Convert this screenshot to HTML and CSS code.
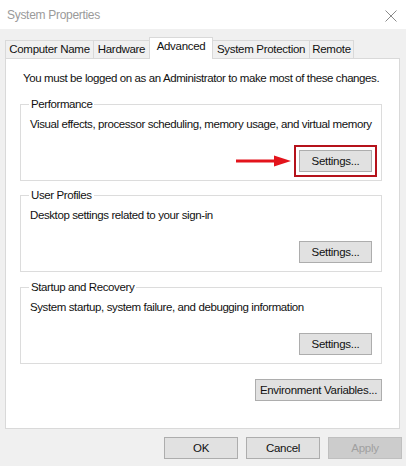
FILE: index.html
```html
<!DOCTYPE html>
<html>
<head>
<meta charset="utf-8">
<link rel="stylesheet" href="styles.css">
</head>
<body>
<div class="window">
  <div class="titlebar">
    <span class="title">System Properties</span>
    <svg class="close" width="12" height="12" viewBox="0 0 12 12"><path d="M0.5 0.5 L11.5 11.5 M11.5 0.5 L0.5 11.5" stroke="#8a8a8a" stroke-width="1" fill="none"/></svg>
  </div>
  <div class="content">
    <div class="tabs">
      <div class="tab t-name">Computer Name</div>
      <div class="tab t-hw">Hardware</div>
      <div class="tab active t-adv">Advanced</div>
      <div class="tab t-sp">System Protection</div>
      <div class="tab t-rem">Remote</div>
    </div>
    <div class="panel">
      <p class="notice">You must be logged on as an Administrator to make most of these changes.</p>
      <fieldset class="group g-perf">
        <legend>Performance</legend>
        <p class="desc">Visual effects, processor scheduling, memory usage, and virtual memory</p>
        <div class="row">
          <svg class="arrow" width="56" height="12" viewBox="0 0 56 12"><path d="M0 4.5 H38 V0.5 L55 6 L38 11.5 V7.5 H0 Z" fill="#e3141c"/></svg>
          <button class="btn highlight">Settings...</button>
        </div>
      </fieldset>
      <fieldset class="group g-user">
        <legend>User Profiles</legend>
        <p class="desc">Desktop settings related to your sign-in</p>
        <div class="row">
          <button class="btn">Settings...</button>
        </div>
      </fieldset>
      <fieldset class="group g-start">
        <legend>Startup and Recovery</legend>
        <p class="desc">System startup, system failure, and debugging information</p>
        <div class="row">
          <button class="btn">Settings...</button>
        </div>
      </fieldset>
      <div class="env-row">
        <button class="btn env">Environment Variables...</button>
      </div>
    </div>
    <div class="footer">
      <button class="btn dlg">OK</button>
      <button class="btn dlg">Cancel</button>
      <button class="btn dlg disabled">Apply</button>
    </div>
  </div>
</div>
</body>
</html>
```

FILE: styles.css
```css
* { box-sizing: border-box; }
html, body {
  margin: 0;
  padding: 0;
  background: #f0f0f0;
}
body {
  font-family: "Liberation Sans", Arial, sans-serif;
  font-size: 11.5px;
  letter-spacing: -0.4px;
  color: #111;
}
.window {
  width: 406px;
  height: 466px;
  background: #f0f0f0;
}
.titlebar {
  height: 29px;
  background: #fff;
  display: flex;
  align-items: center;
  justify-content: space-between;
  padding: 0 9px 0 7px;
}
.title {
  color: #9a9a9a;
  font-size: 12px;
  letter-spacing: -0.3px;
  margin-top: 1px;
}
.close {
  display: block;
  margin-top: 2px;
}
.content {
  padding: 0 6px 0 5px;
}
.tabs {
  display: flex;
  align-items: flex-end;
  height: 21px;
  margin-top: 8px;
  position: relative;
  z-index: 1;
}
.tab {
  height: 18px;
  line-height: 17px;
  border: 1px solid #d9d9d9;
  border-bottom: none;
  background: #f0f0f0;
  text-align: center;
  margin-right: -1px;
  color: #111;
  white-space: nowrap;
  letter-spacing: -0.3px;
}
.t-name { width: 89px; }
.t-hw { width: 57px; }
.t-adv { width: 64px; }
.t-sp { width: 98px; }
.t-rem { width: 45px; }
.tab.active {
  height: 22px;
  line-height: 17px;
  background: #fff;
  margin-bottom: -1px;
  position: relative;
  z-index: 2;
}
.panel {
  background: #fff;
  border: 1px solid #d9d9d9;
  height: 371px;
  padding: 12px 17px 0 14px;
}
.notice {
  margin: 0;
  padding-left: 3px;
  line-height: 15px;
  white-space: nowrap;
}
.group {
  margin: 0;
  border: 1px solid #dcdcdc;
  padding: 0 9px 8px 8px;
  min-width: 0;
}
.group legend {
  padding: 0 2px;
  line-height: 14px;
  margin-left: 0;
}
.g-perf { margin-top: 11px; }
.g-user { margin-top: 7px; }
.g-start { margin-top: 8px; }
.desc {
  margin: 6px 0 0 1px;
  line-height: 14px;
  white-space: nowrap;
}
.row {
  display: flex;
  justify-content: flex-end;
  align-items: center;
  margin-top: 19px;
}
.arrow {
  display: block;
  margin-right: 7px;
}
.btn {
  font-family: "Liberation Sans", Arial, sans-serif;
  font-size: 11.5px;
  letter-spacing: -0.3px;
  color: #111;
  background: #e1e1e1;
  border: 1px solid #adadad;
  height: 22px;
  width: 73px;
  padding: 0;
  margin: 0;
}
.highlight {
  outline: 2px solid #b5121b;
  outline-offset: 3px;
}
.env-row {
  display: flex;
  justify-content: flex-end;
  margin-top: 15px;
}
.btn.env {
  width: 127px;
}
.footer {
  display: flex;
  justify-content: flex-end;
  gap: 8px;
  margin-top: 8px;
  margin-right: -2px;
}
.btn.dlg {
  width: 74px;
}
.btn.disabled {
  color: #a0a0a0;
  background: #cccccc;
  border-color: #bfbfbf;
}
```
